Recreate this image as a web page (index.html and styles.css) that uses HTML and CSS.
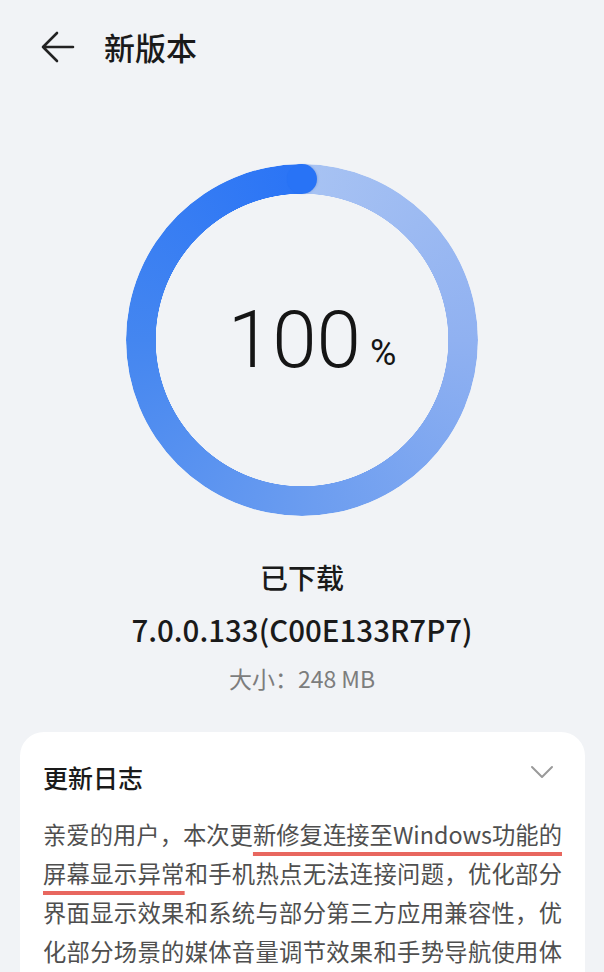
FILE: index.html
```html
<!DOCTYPE html>
<html lang="zh-CN">
<head>
    <meta charset="utf-8">
    <meta name="viewport" content="width=device-width, initial-scale=1">
    <link rel="stylesheet" href="styles.css">
</head>
<body>

<!-- hlavička -->
<div class="header">
    <svg class="back" width="34" height="32" viewBox="0 0 34 32">
        <path d="M32 16H2M16 2L2 16l14 14" fill="none" stroke="#222" stroke-width="2.6" stroke-linecap="round" stroke-linejoin="round"/>
    </svg>
    <h1 class="title">新版本</h1>
</div>

<!-- priebeh sťahovania -->
<div class="ring">
    <div class="ring-track"></div>
    <span class="ring-cap"></span>
    <div class="percent">100<span class="unit">%</span></div>
</div>

<div class="status">已下载</div>
<div class="version">7.0.0.133(C00E133R7P7)</div>
<div class="size">大小：248 MB</div>

<!-- zoznam zmien -->
<div class="card">
    <div class="card-head">
        <h2 class="card-title">更新日志</h2>
        <svg class="chevron" width="24" height="14" viewBox="0 0 24 14">
            <path d="M2 2l10 10L22 2" fill="none" stroke="#9a9a9a" stroke-width="2" stroke-linecap="round" stroke-linejoin="round"/>
        </svg>
    </div>
    <p class="log">亲爱的用户，本次更<span class="mark">新修复连接至Windows功能的屏幕显示异常</span>和手机热点无法连接问题，优化部分界面显示效果和系统与部分第三方应用兼容性，优化部分场景的媒体音量调节效果和手势导航使用体验。</p>
</div>

</body>
</html>
```

FILE: styles.css
```css
* {
    box-sizing: border-box;
}

body {
    margin: 0;
    background: #f1f3f6;
    font-family: "Noto Sans CJK SC", "Noto Sans", sans-serif;
    color: #1a1a1a;
    height: 972px;
    overflow: hidden;
}

/* hlavička */
.header {
    display: flex;
    align-items: center;
    height: 94px;
    padding: 0 0 0 41px;
}

.back {
    display: block;
}

.title {
    margin: 0 0 0 29px;
    font-size: 31px;
    font-weight: 500;
    line-height: 40px;
}

/* kruh */
.ring {
    position: relative;
    width: 352px;
    height: 352px;
    margin: 70px auto 0;
}

.ring-track {
    width: 100%;
    height: 100%;
    border-radius: 50%;
    background: conic-gradient(#a8c3f3 0deg, #90b1f1 90deg, #6a9cf0 180deg, #4486f0 270deg, #2a74f6 360deg);
    -webkit-mask: radial-gradient(farthest-side, transparent calc(100% - 30px), #000 calc(100% - 29.5px));
    mask: radial-gradient(farthest-side, transparent calc(100% - 30px), #000 calc(100% - 29.5px));
}

.ring-cap {
    position: absolute;
    top: 0;
    left: 161px;
    width: 30px;
    height: 30px;
    border-radius: 50%;
    background: #2873f6;
    box-shadow: 1px 0 2px rgba(20, 60, 140, 0.15);
}

.percent {
    position: absolute;
    top: 0;
    left: 0;
    width: 100%;
    height: 100%;
    display: flex;
    align-items: center;
    justify-content: center;
    padding-left: 20px;
    font-family: Roboto, sans-serif;
    font-weight: 300;
    font-size: 80px;
    color: #151515;
    line-height: 1;
}

.unit {
    font-size: 36px;
    font-weight: 400;
    margin: 26px 0 0 9px;
}

/* info o verzii */
.status {
    margin-top: 43px;
    text-align: center;
    font-size: 28px;
    font-weight: 500;
    line-height: 36px;
}

.version {
    margin-top: 16px;
    text-align: center;
    font-size: 29.5px;
    font-weight: 500;
    line-height: 36px;
}

.size {
    margin-top: 17px;
    text-align: center;
    font-size: 23px;
    line-height: 28px;
    color: #7d7d7d;
}

/* karta */
.card {
    margin: 40px 19px 0 20px;
    padding: 28px 23px 40px;
    background: #fff;
    border-radius: 24px;
}

.card-head {
    display: flex;
    justify-content: space-between;
    align-items: flex-start;
}

.card-title {
    margin: 0;
    font-size: 25px;
    font-weight: 500;
    line-height: 34px;
}

.chevron {
    margin: 5px 8px 0 0;
}

.log {
    margin: 21px 0 0;
    font-size: 23.3px;
    line-height: 39px;
    color: #4f4f4f;
    text-align: justify;
}

.mark {
    text-decoration: underline;
    text-decoration-color: #e8675f;
    text-decoration-thickness: 3.5px;
    text-underline-offset: 8px;
}
```
